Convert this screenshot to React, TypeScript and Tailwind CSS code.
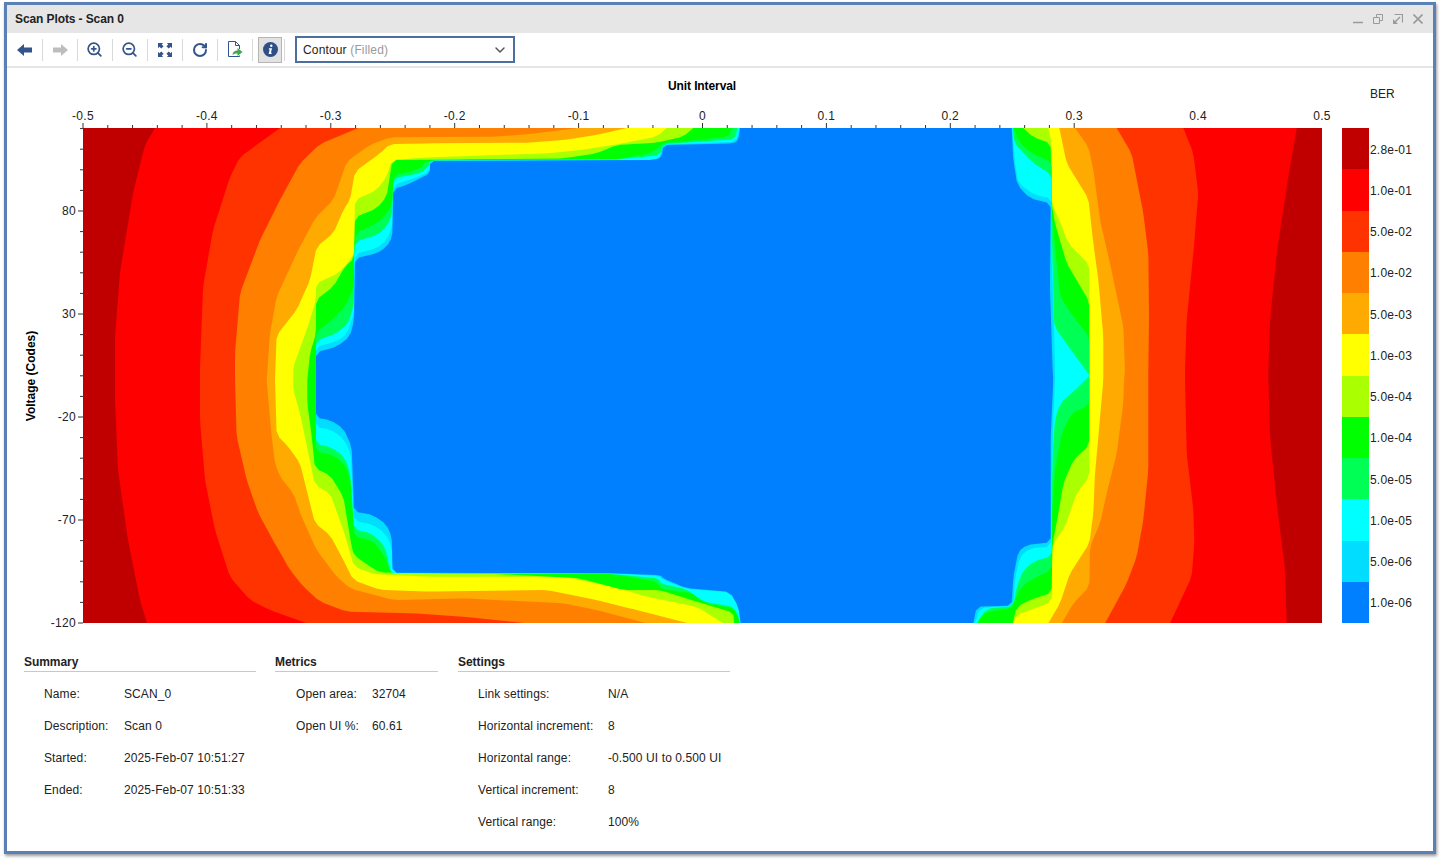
import React from 'react';
import { ChevronDown, RotateCw, ZoomIn, ZoomOut } from 'lucide-react';

type Pt = [number, number];
type Layer = { fill: string; tl: Pt[]; bl: Pt[]; br: Pt[]; tr: Pt[] };

// contour bands, outermost first. Points are read per quadrant at 3x, top to bottom.
const layers: Layer[] = [
  {
    fill: '#ff0000',
    tl: [[-225, 24], [-255, 75], [-291, 219], [-330, 459], [-345, 651], [-345, 780]],
    bl: [[-345, 90], [-336, 300], [-306, 510], [-270, 690], [-249, 760]],
    br: [[925, 30], [930, 200], [950, 400], [975, 600], [980, 760]],
    tr: [[1010, 24], [980, 200], [950, 400], [930, 600], [925, 750]],
  },
  {
    fill: '#ff3300',
    tl: [[150, 24], [30, 111], [0, 171], [-51, 330], [-81, 501], [-90, 750]],
    bl: [[-90, 150], [-75, 330], [-45, 480], [0, 621], [60, 690], [120, 720], [231, 760]],
    br: [[675, 30], [680, 250], [700, 420], [703, 520], [695, 620], [630, 760]],
    tr: [[670, 24], [700, 100], [715, 220], [700, 400], [680, 600], [675, 750]],
  },
  {
    fill: '#ff8000',
    tl: [[385, 24], [270, 72], [210, 130], [150, 240], [90, 360], [30, 520], [15, 700], [15, 780]],
    bl: [[15, 30], [20, 200], [50, 330], [85, 430], [140, 530], [180, 600], [220, 650], [270, 695], [350, 725], [550, 730], [720, 742], [890, 760]],
    br: [[565, 30], [565, 300], [550, 450], [530, 560], [500, 640], [435, 760]],
    tr: [[470, 24], [515, 100], [550, 280], [565, 400], [567, 600], [565, 750]],
  },
  {
    fill: '#ffaa00',
    tl: [[1045, 24], [900, 42], [800, 50], [480, 52], [420, 75], [350, 125], [335, 170], [310, 240], [255, 295], [200, 400], [140, 530], [120, 640], [110, 780]],
    bl: [[110, 30], [125, 200], [135, 280], [150, 320], [190, 370], [215, 440], [260, 540], [320, 620], [360, 655], [490, 690], [700, 685], [1000, 700], [1100, 720], [1250, 760]],
    br: [[492, 30], [490, 100], [470, 250], [440, 370], [420, 460], [390, 530], [388, 650], [340, 700], [305, 760]],
    tr: [[345, 24], [385, 80], [400, 150], [420, 300], [450, 430], [490, 620], [495, 750]],
  },
  {
    fill: '#ffff00',
    tl: [[1190, 24], [1100, 45], [1000, 60], [900, 68], [600, 70], [480, 72], [450, 100], [375, 155], [360, 240], [340, 270], [310, 340], [260, 380], [240, 480], [200, 570], [140, 645], [135, 780]],
    bl: [[135, 30], [140, 195], [175, 230], [210, 280], [255, 460], [300, 495], [340, 570], [370, 630], [450, 660], [600, 665], [950, 660], [1100, 690], [1200, 715], [1375, 760]],
    br: [[430, 30], [415, 200], [405, 310], [400, 430], [388, 520], [330, 610], [300, 700], [265, 760]],
    tr: [[298, 24], [320, 130], [385, 235], [400, 370], [415, 480], [430, 650], [430, 750]],
  },
  {
    fill: '#aaff00',
    tl: [[1310, 24], [1280, 50], [1150, 75], [1050, 90], [950, 100], [600, 112], [485, 120], [470, 170], [440, 210], [375, 240], [372, 400], [360, 420], [325, 460], [258, 490], [258, 540], [230, 630], [190, 740], [190, 780]],
    bl: [[190, 30], [190, 60], [210, 130], [255, 345], [300, 370], [340, 480], [372, 590], [430, 612], [600, 620], [1000, 620], [1150, 650], [1250, 680], [1400, 710], [1480, 760]],
    br: [[388, 30], [388, 320], [350, 370], [315, 470], [277, 525], [275, 695], [225, 715], [170, 735], [160, 760]],
    tr: [[265, 24], [275, 70], [275, 250], [298, 300], [325, 370], [388, 435], [388, 750]],
  },
  {
    fill: '#00ff00',
    tl: [[1390, 24], [1360, 50], [1280, 68], [1160, 75], [1100, 100], [1000, 115], [700, 118], [487, 120], [470, 230], [440, 265], [375, 292], [372, 415], [345, 440], [310, 500], [258, 540], [258, 640], [240, 700], [232, 780]],
    bl: [[232, 30], [232, 100], [245, 200], [255, 295], [300, 315], [340, 380], [365, 530], [372, 555], [420, 590], [450, 607], [800, 612], [1050, 625], [1180, 660], [1290, 660], [1400, 695], [1510, 728], [1512, 760]],
    br: [[388, 30], [388, 225], [340, 270], [310, 340], [295, 430], [277, 525], [275, 668], [215, 688], [170, 710], [158, 760]],
    tr: [[190, 24], [220, 52], [272, 70], [275, 250], [285, 310], [320, 430], [388, 545], [388, 750]],
  },
  {
    fill: '#00ff55',
    tl: [[1505, 24], [1495, 50], [1380, 62], [1300, 68], [1285, 82], [1260, 100], [1160, 118], [700, 120], [590, 122], [570, 145], [540, 155], [490, 165], [487, 250], [470, 280], [440, 310], [375, 340], [372, 420], [372, 500], [345, 560], [300, 605], [258, 635], [258, 780]],
    bl: [[258, 30], [258, 245], [310, 255], [350, 290], [365, 360], [372, 500], [425, 510], [465, 560], [482, 608], [1150, 612], [1280, 635], [1295, 658], [1390, 670], [1425, 700], [1515, 715], [1530, 760]],
    br: [[388, 105], [335, 130], [305, 190], [285, 300], [277, 420], [275, 600], [220, 625], [185, 650], [162, 695], [155, 715], [100, 722], [60, 735], [52, 760]],
    tr: [[160, 24], [180, 70], [215, 100], [275, 125], [275, 280], [290, 430], [300, 530], [340, 590], [388, 650], [388, 750]],
  },
  {
    fill: '#00ffff',
    tl: [[1522, 24], [1515, 58], [1300, 72], [1290, 105], [1160, 118], [600, 122], [595, 140], [570, 160], [490, 175], [487, 280], [470, 320], [440, 345], [375, 365], [372, 420], [372, 550], [355, 610], [320, 640], [258, 662], [258, 780]],
    bl: [[258, 30], [258, 222], [305, 232], [345, 262], [362, 320], [372, 478], [425, 490], [465, 530], [480, 600], [487, 610], [1150, 612], [1285, 625], [1290, 640], [1370, 658], [1420, 695], [1510, 710], [1525, 740], [1530, 760]],
    br: [[388, 18], [345, 60], [300, 100], [285, 150], [278, 250], [275, 400], [275, 560], [225, 572], [190, 600], [170, 650], [160, 708], [80, 716], [50, 760]],
    tr: [[158, 24], [163, 70], [215, 125], [275, 165], [275, 330], [283, 620], [340, 700], [388, 765]],
  },
  {
    fill: '#00ddff',
    tl: [[1528, 24], [1518, 66], [1297, 74], [1292, 110], [1270, 120], [600, 122], [597, 155], [565, 170], [490, 195], [487, 320], [470, 360], [440, 385], [375, 402], [372, 580], [352, 640], [320, 665], [258, 680], [258, 780]],
    bl: [[258, 30], [258, 172], [300, 178], [340, 205], [362, 250], [372, 452], [430, 465], [465, 490], [485, 530], [487, 608], [1150, 610], [1288, 618], [1300, 630], [1370, 657], [1500, 667], [1527, 715], [1532, 760]],
    br: [[285, 30], [278, 200], [275, 330], [272, 530], [210, 535], [180, 560], [165, 625], [160, 708], [60, 713], [44, 760]],
    tr: [[157, 24], [165, 130], [175, 190], [225, 225], [275, 235], [275, 400], [283, 650], [285, 750]],
  },
  {
    fill: '#0080ff',
    tl: [[1530, 24], [1525, 60], [1510, 70], [1300, 75], [1295, 112], [1270, 120], [600, 123], [600, 160], [570, 175], [530, 195], [490, 207], [487, 350], [470, 380], [440, 400], [375, 415], [372, 600], [360, 650], [320, 680], [258, 697], [258, 780]],
    bl: [[258, 30], [258, 143], [300, 150], [340, 175], [365, 230], [372, 425], [430, 435], [470, 465], [485, 500], [488, 608], [1150, 610], [1290, 615], [1300, 625], [1370, 655], [1500, 665], [1525, 710], [1532, 760]],
    br: [[280, 30], [272, 200], [272, 517], [200, 525], [175, 545], [160, 620], [155, 707], [50, 710], [40, 760]],
    tr: [[155, 24], [160, 120], [172, 195], [210, 235], [272, 250], [270, 500], [278, 750]],
  },
];

// cut each inner corner a little so the contours are not so angular
const soften = (pts: number[][]) =>
  pts.flatMap((p, i) => {
    if (i === 0 || i === pts.length - 1) return [p];
    const toward = (q: number[]) => {
      const len = Math.hypot(q[0] - p[0], q[1] - p[1]) || 1;
      const cut = Math.min(len * 0.25, 4);
      return [p[0] + ((q[0] - p[0]) * cut) / len, p[1] + ((q[1] - p[1]) * cut) / len];
    };
    return [toward(pts[i - 1]), toward(pts[i + 1])];
  });

const toPoints = (l: Layer) => {
  const left = (p: Pt, top: number) => [230 + p[0] / 3, top + p[1] / 3];
  const right = (p: Pt, top: number) => [960 + p[0] / 3, top + p[1] / 3];
  const leftSide = [...l.tl.map((p) => left(p, 120)), ...l.bl.map((p) => left(p, 370))];
  const rightSide = [...[...l.br].reverse().map((p) => right(p, 370)), ...[...l.tr].reverse().map((p) => right(p, 120))];
  return [...soften(leftSide), ...soften(rightSide)].map((p) => p.map((n) => n.toFixed(1)).join(',')).join(' ');
};

const xLabels = ['-0.5', '-0.4', '-0.3', '-0.2', '-0.1', '0', '0.1', '0.2', '0.3', '0.4', '0.5'];
const yLabels = ['80', '30', '-20', '-70', '-120'];
const legend: [string, string][] = [
  ['#c00000', '2.8e-01'],
  ['#ff0000', '1.0e-01'],
  ['#ff3300', '5.0e-02'],
  ['#ff8000', '1.0e-02'],
  ['#ffaa00', '5.0e-03'],
  ['#ffff00', '1.0e-03'],
  ['#aaff00', '5.0e-04'],
  ['#00ff00', '1.0e-04'],
  ['#00ff55', '5.0e-05'],
  ['#00ffff', '1.0e-05'],
  ['#00ddff', '5.0e-06'],
  ['#0080ff', '1.0e-06'],
];

const Chart = () => (
  <svg viewBox="7 68 1335 572" className="w-[1335px] h-[572px] shrink-0">
    <svg x={83} y={128} width={1239} height={495} viewBox="83 128 1239 495">
      <rect x={83} y={128} width={1239} height={495} fill="#c00000" />
      {layers.map((l) => (
        <polygon key={l.fill} points={toPoints(l)} fill={l.fill} />
      ))}
    </svg>
    {Array.from({ length: 41 }, (_, i) => {
      const x = 83 + i * 30.975 * 0.8;
      return <line key={i} x1={x} x2={x} y1={i % 5 === 0 ? 123 : 125} y2={128} stroke="#333" strokeWidth={1} />;
    })}
    {Array.from({ length: 25 }, (_, i) => {
      const y = 623 - i * 20.6;
      return <line key={i} x1={i % 5 === 0 ? 78 : 80} x2={83} y1={y} y2={y} stroke="#333" strokeWidth={1} />;
    })}
    <g fontFamily='"Liberation Sans", Arial, sans-serif' fontSize={12} fill="#222">
      {xLabels.map((t, i) => (
        <text key={t} x={83 + i * 123.9} y={120} textAnchor="middle" letterSpacing={0.3}>
          {t}
        </text>
      ))}
      {yLabels.map((t, i) => (
        <text key={t} x={76} y={215 + i * 103} textAnchor="end" letterSpacing={0.3}>
          {t}
        </text>
      ))}
      <text x={702} y={90} textAnchor="middle" fontWeight="bold" fill="#000" letterSpacing={-0.1}>
        Unit Interval
      </text>
      <text transform="translate(35 376) rotate(-90)" textAnchor="middle" fontWeight="bold" fill="#000">
        Voltage (Codes)
      </text>
    </g>
  </svg>
);

const Legend = () => (
  <div className="flex flex-col w-[85px]">
    <div className="h-[60px] pl-[28px] pt-[19px] leading-[15px] text-[12px] text-[#222]">BER</div>
    {legend.map(([color, label]) => (
      <div key={label} className="flex items-center h-[41.25px]">
        <div className="w-[27px] h-full" style={{ backgroundColor: color }} />
        <span className="pl-px pt-[2px] text-[12px] tracking-[0.2px] text-[#222]">{label}</span>
      </div>
    ))}
  </div>
);

const ToolButton = ({ children }: { children: React.ReactNode }) => (
  <>
    <div className="w-[34px] h-full flex items-center justify-center">{children}</div>
    <div className="w-px h-[22px] bg-[#d9d9d9]" />
  </>
);

const Toolbar = () => (
  <div className="flex items-center h-[35px] pl-[1px] border-b-2 border-[#e6e6e6] bg-white">
    <ToolButton>
      <svg width="16" height="12" viewBox="0 0 16 12">
        <path d="M0 6 7 0v3.5h8v5H7V12z" fill="#34558b" />
      </svg>
    </ToolButton>
    <ToolButton>
      <svg width="16" height="12" viewBox="0 0 16 12">
        <path d="M16 6 9 0v3.5H1v5h8V12z" fill="#bdbdbd" />
      </svg>
    </ToolButton>
    <ToolButton>
      <ZoomIn size={17} strokeWidth={2.4} color="#34558b" className="-ml-px" />
    </ToolButton>
    <ToolButton>
      <ZoomOut size={17} strokeWidth={2.4} color="#34558b" className="-ml-px" />
    </ToolButton>
    <ToolButton>
      <svg width="14" height="14" viewBox="0 0 15 15" fill="#34558b">
        <path d="M0 0h5.500L4 1.500l2 2L3.500 6l-2-2L0 5.500z" />
        <path d="M15 0H9.500L11 1.500l-2 2L11.500 6l2-2L15 5.500z" />
        <path d="M0 15h5.500L4 13.500l2-2L3.500 9l-2 2L0 9.500z" />
        <path d="M15 15H9.500l1.500-1.500-2-2L11.500 9l2 2L15 9.500z" />
      </svg>
    </ToolButton>
    <ToolButton>
      <RotateCw size={16} strokeWidth={3} color="#34558b" className="-ml-px" />
    </ToolButton>
    <ToolButton>
      <svg width="16" height="17" viewBox="0 0 16 17" fill="none">
        <path d="M1.500.5h7l4 4V8M12.500 14.500v1h-11V.5M8.500.5v4h4" stroke="#34558b" />
        <path d="M5.500 14c0-3 2-4.500 5-4.500V7l5 4-5 4v-2.500c-2 0-3.500.3-5 1.500z" fill="#3fa652" />
      </svg>
    </ToolButton>
    <div className="w-[34px] h-full flex items-center justify-center">
      <div className="w-[24px] h-[26px] bg-[#e2e2e2] border border-[#b5b5b5] flex items-center justify-center">
        <svg width="15" height="15" viewBox="0 0 15 15">
          <circle cx="7.500" cy="7.500" r="7.500" fill="#2e4f86" />
          <circle cx="8.300" cy="3.800" r="1.200" fill="#fff" />
          <path d="M6 6.300h3L7.900 10.800h1L8.500 12H5.600l1.100-4.500H5.800z" fill="#fff" />
        </svg>
      </div>
    </div>
    <div className="w-px h-[22px] bg-[#d9d9d9] ml-[-3px]" />
    <div className="ml-[10px] w-[220px] h-[27px] border-2 border-[#4d6f9f] flex items-center justify-between pl-[6px] pr-[5px] text-[12px] tracking-[0.15px]">
      <span className="text-[#222]">
        Contour <span className="text-[#9a9a9a]">(Filled)</span>
      </span>
      <ChevronDown size={16} strokeWidth={2.2} color="#555" />
    </div>
  </div>
);

const WindowButtons = () => (
  <div className="flex items-center gap-[10px]">
    <svg width="10" height="10" viewBox="0 0 10 10">
      <path d="M0 8.500h10" stroke="#9a9a9a" strokeWidth="1.500" />
    </svg>
    <svg width="10" height="10" viewBox="0 0 10 10" fill="none" stroke="#9a9a9a">
      <path d="M.5 3.500h6v6h-6zM3.500 3.500v-3h6v6h-3" />
    </svg>
    <svg width="10" height="10" viewBox="0 0 10 10" fill="none" stroke="#9a9a9a">
      <path d="M1.500.5h8v8" strokeWidth="1.200" />
      <path d="M7 3 1 9" strokeWidth="1.500" />
      <path d="M0 5v5h5z" fill="#9a9a9a" stroke="none" />
    </svg>
    <svg width="10" height="10" viewBox="0 0 10 10" stroke="#9a9a9a" strokeWidth="1.600">
      <path d="m.5.500 9 9M9.500.500l-9 9" />
    </svg>
  </div>
);

const Section = ({
  title,
  rows,
  width,
  indent,
  labelWidth,
}: {
  title: string;
  rows: [string, string][];
  width: string;
  indent: string;
  labelWidth: string;
}) => (
  <div className={width}>
    <div className="h-[16px] border-b border-[#c8c8c8] font-bold text-[12px] leading-[13px] tracking-[-0.05px] text-[#222]">{title}</div>
    <div className={indent}>
      {rows.map(([k, v]) => (
        <div key={k} className="flex items-center h-[32px] text-[12px] tracking-[0.1px] text-[#222]">
          <div className={labelWidth}>{k}</div>
          <div>{v}</div>
        </div>
      ))}
    </div>
  </div>
);

export default function App() {
  return (
    <div className="w-[1440px] h-[860px] bg-white pl-[4px] pt-[2px] overflow-hidden" style={{ fontFamily: '"Liberation Sans", Arial, sans-serif' }}>
      <div className="w-[1432px] h-[852px] border-[3px] border-[#5b80b6] bg-white shadow-[1px_2px_3px_#999] flex flex-col">
        <div className="h-[28px] shrink-0 bg-[#e6e6e6] flex items-center justify-between pl-[8px] pr-[10px]">
          <span className="font-bold text-[12px] tracking-[-0.1px] text-[#222]">Scan Plots - Scan 0</span>
          <WindowButtons />
        </div>
        <Toolbar />
        <div className="flex">
          <Chart />
          <Legend />
        </div>
        <div className="flex pl-[17px] pt-[16px]">
          <Section
            title="Summary"
            width="w-[232px] mr-[19px]"
            indent="pt-[6px] pl-[20px]"
            labelWidth="w-[80px]"
            rows={[
              ['Name:', 'SCAN_0'],
              ['Description:', 'Scan 0'],
              ['Started:', '2025-Feb-07 10:51:27'],
              ['Ended:', '2025-Feb-07 10:51:33'],
            ]}
          />
          <Section
            title="Metrics"
            width="w-[163px] mr-[20px]"
            indent="pt-[6px] pl-[21px]"
            labelWidth="w-[76px]"
            rows={[
              ['Open area:', '32704'],
              ['Open UI %:', '60.61'],
            ]}
          />
          <Section
            title="Settings"
            width="w-[272px]"
            indent="pt-[6px] pl-[20px]"
            labelWidth="w-[130px]"
            rows={[
              ['Link settings:', 'N/A'],
              ['Horizontal increment:', '8'],
              ['Horizontal range:', '-0.500 UI to 0.500 UI'],
              ['Vertical increment:', '8'],
              ['Vertical range:', '100%'],
            ]}
          />
        </div>
      </div>
    </div>
  );
}
